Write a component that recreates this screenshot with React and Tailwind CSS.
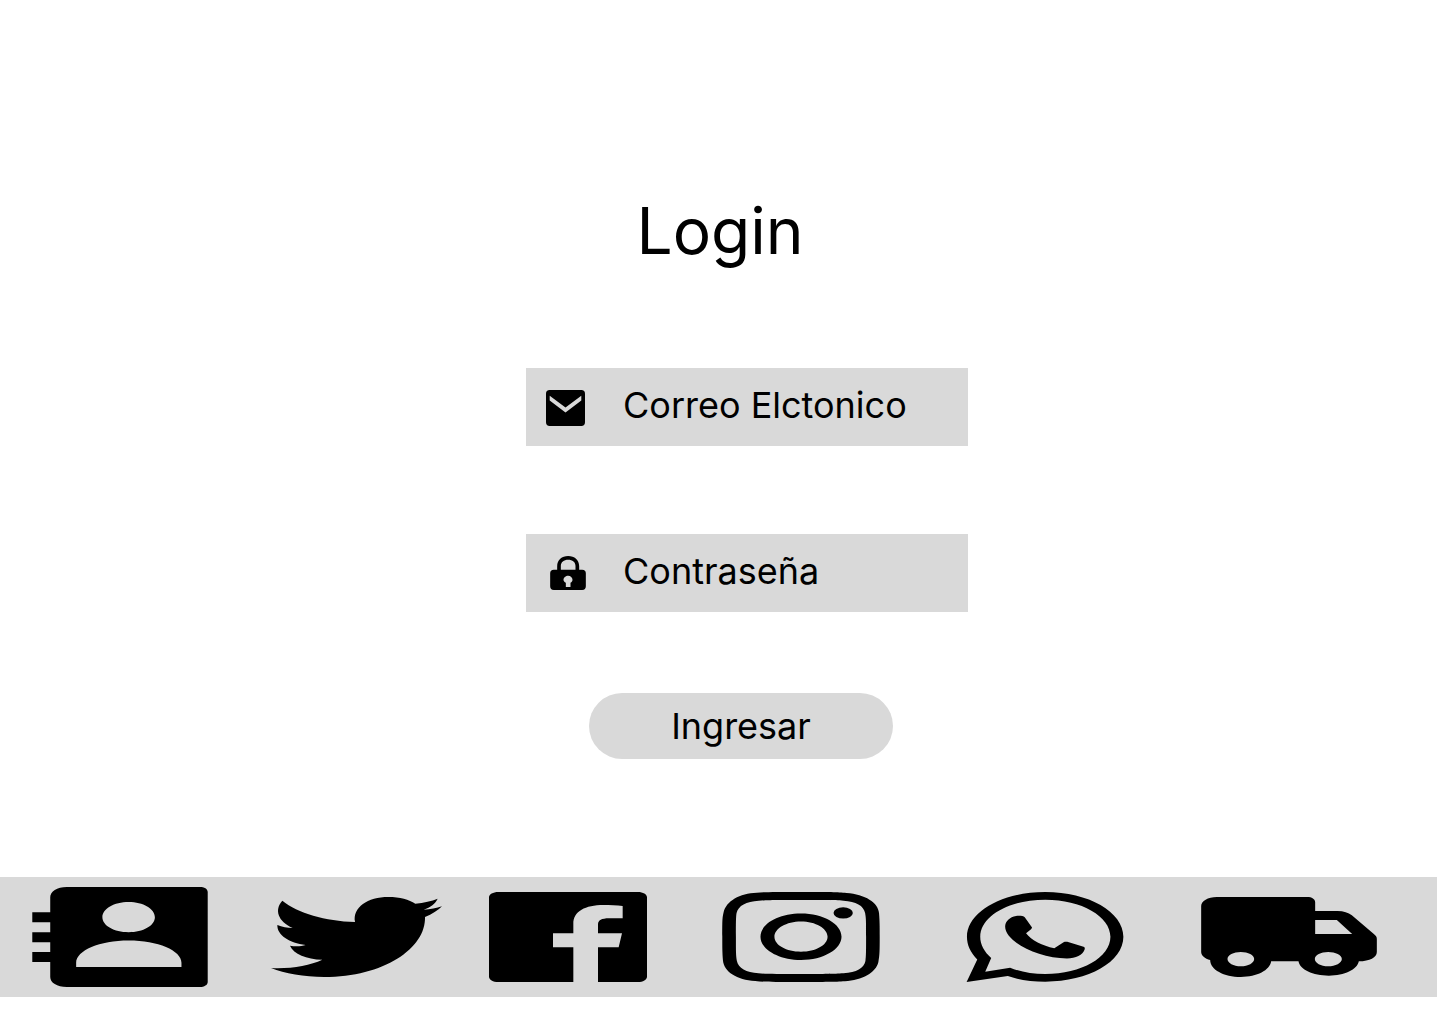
import React from "react";

const MailIcon = () => (
  <svg viewBox="77 90 116 107" className="h-9 w-[39px]" aria-hidden="true">
    <path fillRule="evenodd" d="M88 90H182Q193 90 193 101V186Q193 197 182 197H88Q77 197 77 186V101Q77 90 88 90ZM88 107V121L135 157L182 121V107L135 142Z" />
  </svg>
);

const LockIcon = () => (
  <svg viewBox="90 84 107 102" className="h-[34px] w-9" aria-hidden="true">
    <path fillRule="evenodd" d="M111 125V115C111 96 125 84 144 84C163 84 177 96 177 115V125H186Q197 125 197 136V175Q197 186 186 186H101Q90 186 90 175V136Q90 125 101 125ZM122 125H166V114C166 102 157 95 144 95C131 95 122 102 122 114ZM137 177H151V164C155 162 157 159 157 155C157 148 151 143 144 143C137 143 130 148 130 155C130 159 133 162 137 164Z" />
  </svg>
);

const ContactsIcon = () => (
  <svg viewBox="36 50 528 301" className="h-[100px] w-44" aria-hidden="true">
    <path fillRule="evenodd" d="M90 81C90 63 110 50 140 50H540C554 50 564 56 564 65V336C564 345 554 351 540 351H140C110 351 90 338 90 321V276H36V246H90V216H36V186H90V156H36V126H90ZM326 95C282 95 247 115 247 141C247 166 282 186 326 186C370 186 405 166 405 141C405 115 370 95 326 95ZM168 291H485V278C485 241 414 211 326 211C239 211 168 241 168 278Z" />
  </svg>
);

const TwitterIcon = () => (
  <svg viewBox="33 81 513 240" className="h-20 w-[171px]" aria-hidden="true">
    <path d="M67 92C113 129 196 153 285 156C277 112 323 81 385 81C420 81 447 89 466 101C492 98 515 93 533 86C526 101 512 112 491 119C511 118 530 114 546 109C534 121 516 133 495 141C498 235 371 321 193 321C132 321 74 310 33 294C91 297 148 287 187 269C139 268 101 252 90 227C107 230 124 229 137 225C88 219 51 195 52 165C66 171 82 174 98 174C54 154 42 119 67 92Z" />
  </svg>
);

const FacebookIcon = () => (
  <svg viewBox="27 66 474 270" className="h-[90px] w-[158px]" aria-hidden="true">
    <path d="M55 66H474C489 66 501 73 501 82V320C501 329 489 336 474 336H354V232H416L426 190H354V163C354 151 365 145 387 145H428V108C410 106 390 105 370 105C316 105 280 124 280 161V190H219V232H280V336H55C39 336 27 329 27 320V82C27 73 39 66 55 66Z" />
  </svg>
);

const InstagramIcon = () => (
  <svg viewBox="36 66 474 271" className="h-[90px] w-[158px]" aria-hidden="true">
    <path fillRule="evenodd" d="M273 66C360 66 382 66 410 69C466 73 506 98 508 130C510 155 510 170 510 201C510 243 510 257 506 277C499 309 457 332 405 335C375 337 345 337 273 337C186 337 164 337 135 334C80 330 41 306 38 272C36 249 36 233 36 201C36 151 36 144 40 127C48 93 88 70 140 68C165 66 200 66 273 66ZM273 90C195 90 179 90 146 92C108 94 84 107 79 129C77 140 77 159 77 201C77 248 77 257 80 274C84 295 108 309 145 311C170 313 200 313 273 313C350 313 369 313 401 311C440 309 463 295 467 274C469 259 469 245 469 201C469 153 469 145 466 129C462 107 438 94 401 92C369 90 350 90 273 90Z" />
    <path fillRule="evenodd" d="M273 131C205 131 151 162 151 201C151 239 205 271 273 271C340 271 395 239 395 201C395 162 340 131 273 131ZM273 155C317 155 353 176 353 201C353 226 317 246 273 246C229 246 193 226 193 201C193 176 229 155 273 155Z" />
    <ellipse cx="400" cy="129" rx="29" ry="17" />
  </svg>
);

const WhatsappIcon = () => (
  <svg viewBox="35 66 472 271" className="h-[90px] w-[158px]" aria-hidden="true">
    <path fillRule="evenodd" d="M272 66C402 66 507 126 507 201C507 276 402 336 272 336C231 336 194 331 159 319L35 337L67 269C46 248 36 226 36 201C36 126 142 66 272 66ZM272 89C163 89 76 139 76 201C76 225 88 246 109 265L91 306L166 294C196 306 232 313 272 313C381 313 468 263 468 201C468 139 381 89 272 89Z" />
    <path d="M184 138C195 137 206 138 210 142L232 173C231 179 221 184 214 190C230 211 263 228 299 235L327 217C332 215 337 216 343 217L387 231C392 233 391 236 390 240C385 255 364 266 337 266C251 266 151 216 151 170C151 154 165 141 184 138Z" />
  </svg>
);

const TruckIcon = () => (
  <svg viewBox="34 78 527 240" className="h-20 w-44" aria-hidden="true">
    <path fillRule="evenodd" d="M81 78H352C366 78 376 84 376 94V120H443C462 120 475 125 486 133L552 189C558 194 561 197 561 204V243C561 259 540 271 507 271C502 296 464 314 417 314C369 314 330 296 326 271H244C240 298 202 318 153 318C102 318 61 296 61 267C45 263 34 254 34 243V105C34 90 54 78 81 78ZM376 147V189H487L441 147ZM153 243C131 243 113 252 113 264C113 276 131 286 153 286C175 286 193 276 193 264C193 252 175 243 153 243ZM415 243C393 243 375 252 375 264C375 276 393 286 415 286C437 286 456 276 456 264C456 252 437 243 415 243Z" />
  </svg>
);

const links = [
  ["Contactos", ContactsIcon],
  ["Twitter", TwitterIcon],
  ["Facebook", FacebookIcon],
  ["Instagram", InstagramIcon],
  ["WhatsApp", WhatsappIcon],
  ["Envíos", TruckIcon],
];

function Field({ id, type, label, children }) {
  return (
    <div className="flex h-[78px] items-center bg-[#d9d9d9] pl-5">
      <label htmlFor={id} aria-label={label} className="flex w-[77px] shrink-0 items-center">
        {children}
      </label>
      <input
        id={id}
        type={type}
        placeholder={label}
        className="h-full w-full min-w-0 bg-transparent pb-1 text-4xl text-black outline-none placeholder:text-black placeholder:opacity-100"
      />
    </div>
  );
}

export default function App() {
  return (
    <div className="flex min-h-screen flex-col bg-white font-['Inter',sans-serif] text-black">
      <main className="flex grow flex-col items-center pt-[191px]">
        <h1 className="pl-[3px] text-[64px] leading-[80px]">Login</h1>
        <form className="mt-[97px] flex flex-col items-center" onSubmit={(e) => e.preventDefault()}>
          <div className="flex flex-col gap-[88px] pl-[57px]">
            <div className="w-[442px]">
              <Field id="email" type="email" label="Correo Elctonico">
                <span className="pt-0.5">
                  <MailIcon />
                </span>
              </Field>
            </div>
            <div className="w-[442px]">
              <Field id="password" type="password" label="Contraseña">
                <span className="pl-1">
                  <LockIcon />
                </span>
              </Field>
            </div>
          </div>
          <div className="mt-[81px] pl-[45px]">
            <button type="submit" className="h-[66px] w-[304px] rounded-full bg-[#d9d9d9] text-4xl">
              Ingresar
            </button>
          </div>
        </form>
      </main>
      <footer className="mb-[22px] bg-[#d9d9d9]">
        <nav className="grid h-[120px] grid-cols-[208fr_234fr_205fr_233fr_244fr_253fr_60fr] items-center justify-items-end">
          {links.map(([name, Icon]) => (
            <a key={name} href="#" aria-label={name}>
              <Icon />
            </a>
          ))}
        </nav>
      </footer>
    </div>
  );
}
